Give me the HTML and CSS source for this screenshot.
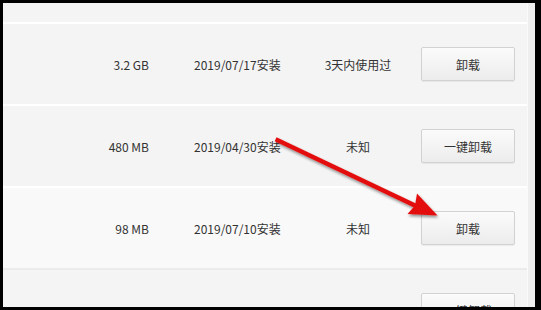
FILE: index.html
```html
<!DOCTYPE html>
<html lang="zh-CN">
<head>
    <meta charset="UTF-8">
    <title>软件管理</title>
    <link rel="stylesheet" href="styles.css">
</head>
<body>
    <div class="window">
        <div class="list">
            <div class="row partial"></div>
            <div class="row">
                <div class="size">3.2 GB</div>
                <div class="date">2019/07/17安装</div>
                <div class="status">3天内使用过</div>
                <div class="action"><button type="button">卸载</button></div>
            </div>
            <div class="row">
                <div class="size">480 MB</div>
                <div class="date">2019/04/30安装</div>
                <div class="status">未知</div>
                <div class="action"><button type="button">一键卸载</button></div>
            </div>
            <div class="row hover">
                <div class="size">98 MB</div>
                <div class="date">2019/07/10安装</div>
                <div class="status">未知</div>
                <div class="action"><button type="button">卸载</button></div>
            </div>
            <div class="row">
                <div class="size"></div>
                <div class="date"></div>
                <div class="status"></div>
                <div class="action"><button type="button">一键卸载</button></div>
            </div>
        </div>
        <div class="scrollbar"></div>

        <!-- annotation arrow drawn over the list -->
        <svg class="arrow" width="532" height="304" viewBox="0 0 532 304">
            <defs>
                <filter id="shadow" x="-10%" y="-10%" width="130%" height="140%">
                    <feGaussianBlur in="SourceAlpha" stdDeviation="1.5"/>
                    <feOffset dx="1" dy="2" result="blur"/>
                    <feComponentTransfer><feFuncA type="linear" slope="0.45"/></feComponentTransfer>
                    <feMerge><feMergeNode/><feMergeNode in="SourceGraphic"/></feMerge>
                </filter>
            </defs>
            <g filter="url(#shadow)" fill="#e41010" stroke="none">
                <path d="M273.5 134.2 L414 201 L412 205 L271.7 138.3 Z"/>
                <path d="M434.5 212.5 L404.5 211 L412 202.5 L414 190.5 Z"/>
            </g>
        </svg>
    </div>
</body>
</html>
```

FILE: styles.css
```css
body {
    margin: 0;
    background-color: #000;
    font-family: "Noto Sans CJK SC", "Microsoft YaHei", sans-serif;
    font-size: 12px;
    color: #333;
}
.window {
    position: relative;
    display: flex;
    width: 532px;
    height: 304px;
    margin: 3px 0 0 3px;
    overflow: hidden;
    background-color: #f4f4f4;
}
.list {
    flex: 1;
    display: flex;
    flex-direction: column;
}
.row {
    display: flex;
    align-items: center;
    flex-shrink: 0;
    height: 80px;
    background-color: #f4f4f4;
    border-bottom: 2px solid #fff;
}
.row.partial {
    height: 19px;
}
.row.hover {
    background-color: #f9f9f9;
    border-bottom-color: #ebebeb;
}
.size {
    width: 146px;
    text-align: right;
}
.date {
    width: 114px;
    margin-left: 45px;
}
.status {
    width: 100px;
    text-align: center;
}
.action {
    margin-left: 13px;
}
.action button {
    width: 94px;
    height: 34px;
    padding: 0;
    font-family: inherit;
    font-size: 12px;
    color: #333;
    background: linear-gradient(#fbfbfb, #ececec);
    border: 1px solid #d2d2d2;
    border-radius: 2px;
    box-shadow: 0 1px 1px rgba(0, 0, 0, 0.06);
    cursor: pointer;
}
.scrollbar {
    width: 7px;
    background-color: #eeeeee;
    border-left: 1px solid #fafafa;
}
.arrow {
    position: absolute;
    top: 0;
    left: 0;
    pointer-events: none;
}
```
